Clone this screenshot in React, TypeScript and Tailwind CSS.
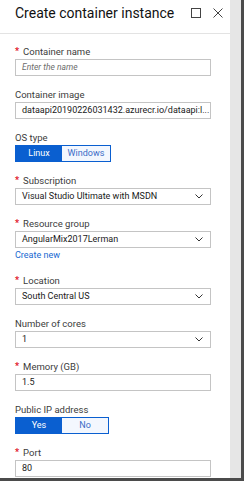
import React from "react";

const font = { fontFamily: 'Roboto, "Open Sans", "Noto Sans", sans-serif' };

function Label({ text, required }: { text: string; required?: boolean }) {
  return (
    <div className="h-[15px] leading-[15px] text-[9.5px] text-[#3c3c3c] flex items-center whitespace-nowrap">
      {required && <span className="text-[#e00b1c] text-[9px] mr-[4px] font-bold">*</span>}
      <span>{text}</span>
    </div>
  );
}

function Input({ value, placeholder }: { value?: string; placeholder?: string }) {
  return (
    <div className="h-[17px] w-[196px] border border-[#c4c4c4] bg-white flex items-center px-[6px] text-[9px] text-[#1a1a1a] whitespace-nowrap overflow-hidden">
      {value ? (
        <span>{value}</span>
      ) : (
        <span className="italic text-[#6b6b6b] text-[8.5px]">{placeholder}</span>
      )}
    </div>
  );
}

function Select({ value }: { value: string }) {
  return (
    <div className="h-[17px] w-[196px] border border-[#c4c4c4] bg-white flex items-center justify-between pl-[6px] pr-[7px] text-[9px] text-[#1a1a1a] whitespace-nowrap">
      <span>{value}</span>
      <svg width="8" height="5" viewBox="0 0 8 5" fill="none">
        <path d="M0.5 0.5 L4 4 L7.5 0.5" stroke="#333" strokeWidth="1" />
      </svg>
    </div>
  );
}

function Toggle({ a, b, w2 }: { a: string; b: string; w2: number }) {
  return (
    <div className="flex h-[17px] border border-[#0a5fd0] text-[9px] w-fit">
      <div className="w-[46px] bg-[#0a5fd0] text-white flex items-center justify-center">{a}</div>
      <div
        className="bg-[#f3f7fe] text-[#3a6bc6] flex items-center justify-center"
        style={{ width: w2 }}
      >
        {b}
      </div>
    </div>
  );
}

export default function App() {
  return (
    <div className="w-[246px] h-[484px] bg-white overflow-hidden" style={font}>
      <div className="flex w-[244px] h-[481px] border-r-[3px] border-b-[3px] border-[#4b4b4b]">
        <div className="w-[230px] h-full bg-white flex flex-col">
          <div className="h-[34px] border-b border-[#e3e3e3] flex items-start pt-[3px] pl-[15px] pr-[7px]">
            <div className="text-[14px] leading-[20px] text-[#111] flex-1 whitespace-nowrap">Create container instance</div>
            <div className="flex items-center gap-[12px] mt-[5px]">
              <svg width="10" height="10" viewBox="0 0 10 10" fill="none">
                <rect x="0.5" y="0.5" width="9" height="9" stroke="#444" strokeWidth="1" />
              </svg>
              <svg width="10" height="10" viewBox="0 0 10 10" fill="none">
                <path d="M0.5 0.5 L9.5 9.5 M9.5 0.5 L0.5 9.5" stroke="#444" strokeWidth="1" />
              </svg>
            </div>
          </div>
          <div className="pl-[15px] pt-[10px] flex flex-col gap-[11px]">
            <div>
              <Label text="Container name" required />
              <Input placeholder="Enter the name" />
            </div>
            <div>
              <Label text="Container image" />
              <Input value="dataapi20190226031432.azurecr.io/dataapi:l..." />
            </div>
            <div>
              <Label text="OS type" />
              <Toggle a="Linux" b="Windows" w2={48} />
            </div>
            <div>
              <Label text="Subscription" required />
              <Select value="Visual Studio Ultimate with MSDN" />
            </div>
            <div>
              <Label text="Resource group" required />
              <Select value="AngularMix2017Lerman" />
              <div className="h-[13px] leading-[13px] mt-[1px] text-[9px] text-[#1769d1]">Create new</div>
            </div>
            <div>
              <Label text="Location" required />
              <Select value="South Central US" />
            </div>
            <div>
              <Label text="Number of cores" />
              <Select value="1" />
            </div>
            <div>
              <Label text="Memory (GB)" required />
              <Input value="1.5" />
            </div>
            <div>
              <Label text="Public IP address" />
              <Toggle a="Yes" b="No" w2={46} />
            </div>
            <div>
              <Label text="Port" required />
              <Input value="80" />
            </div>
          </div>
        </div>
        <div className="w-[11px] h-full bg-[#e6e6e6]" />
      </div>
    </div>
  );
}
